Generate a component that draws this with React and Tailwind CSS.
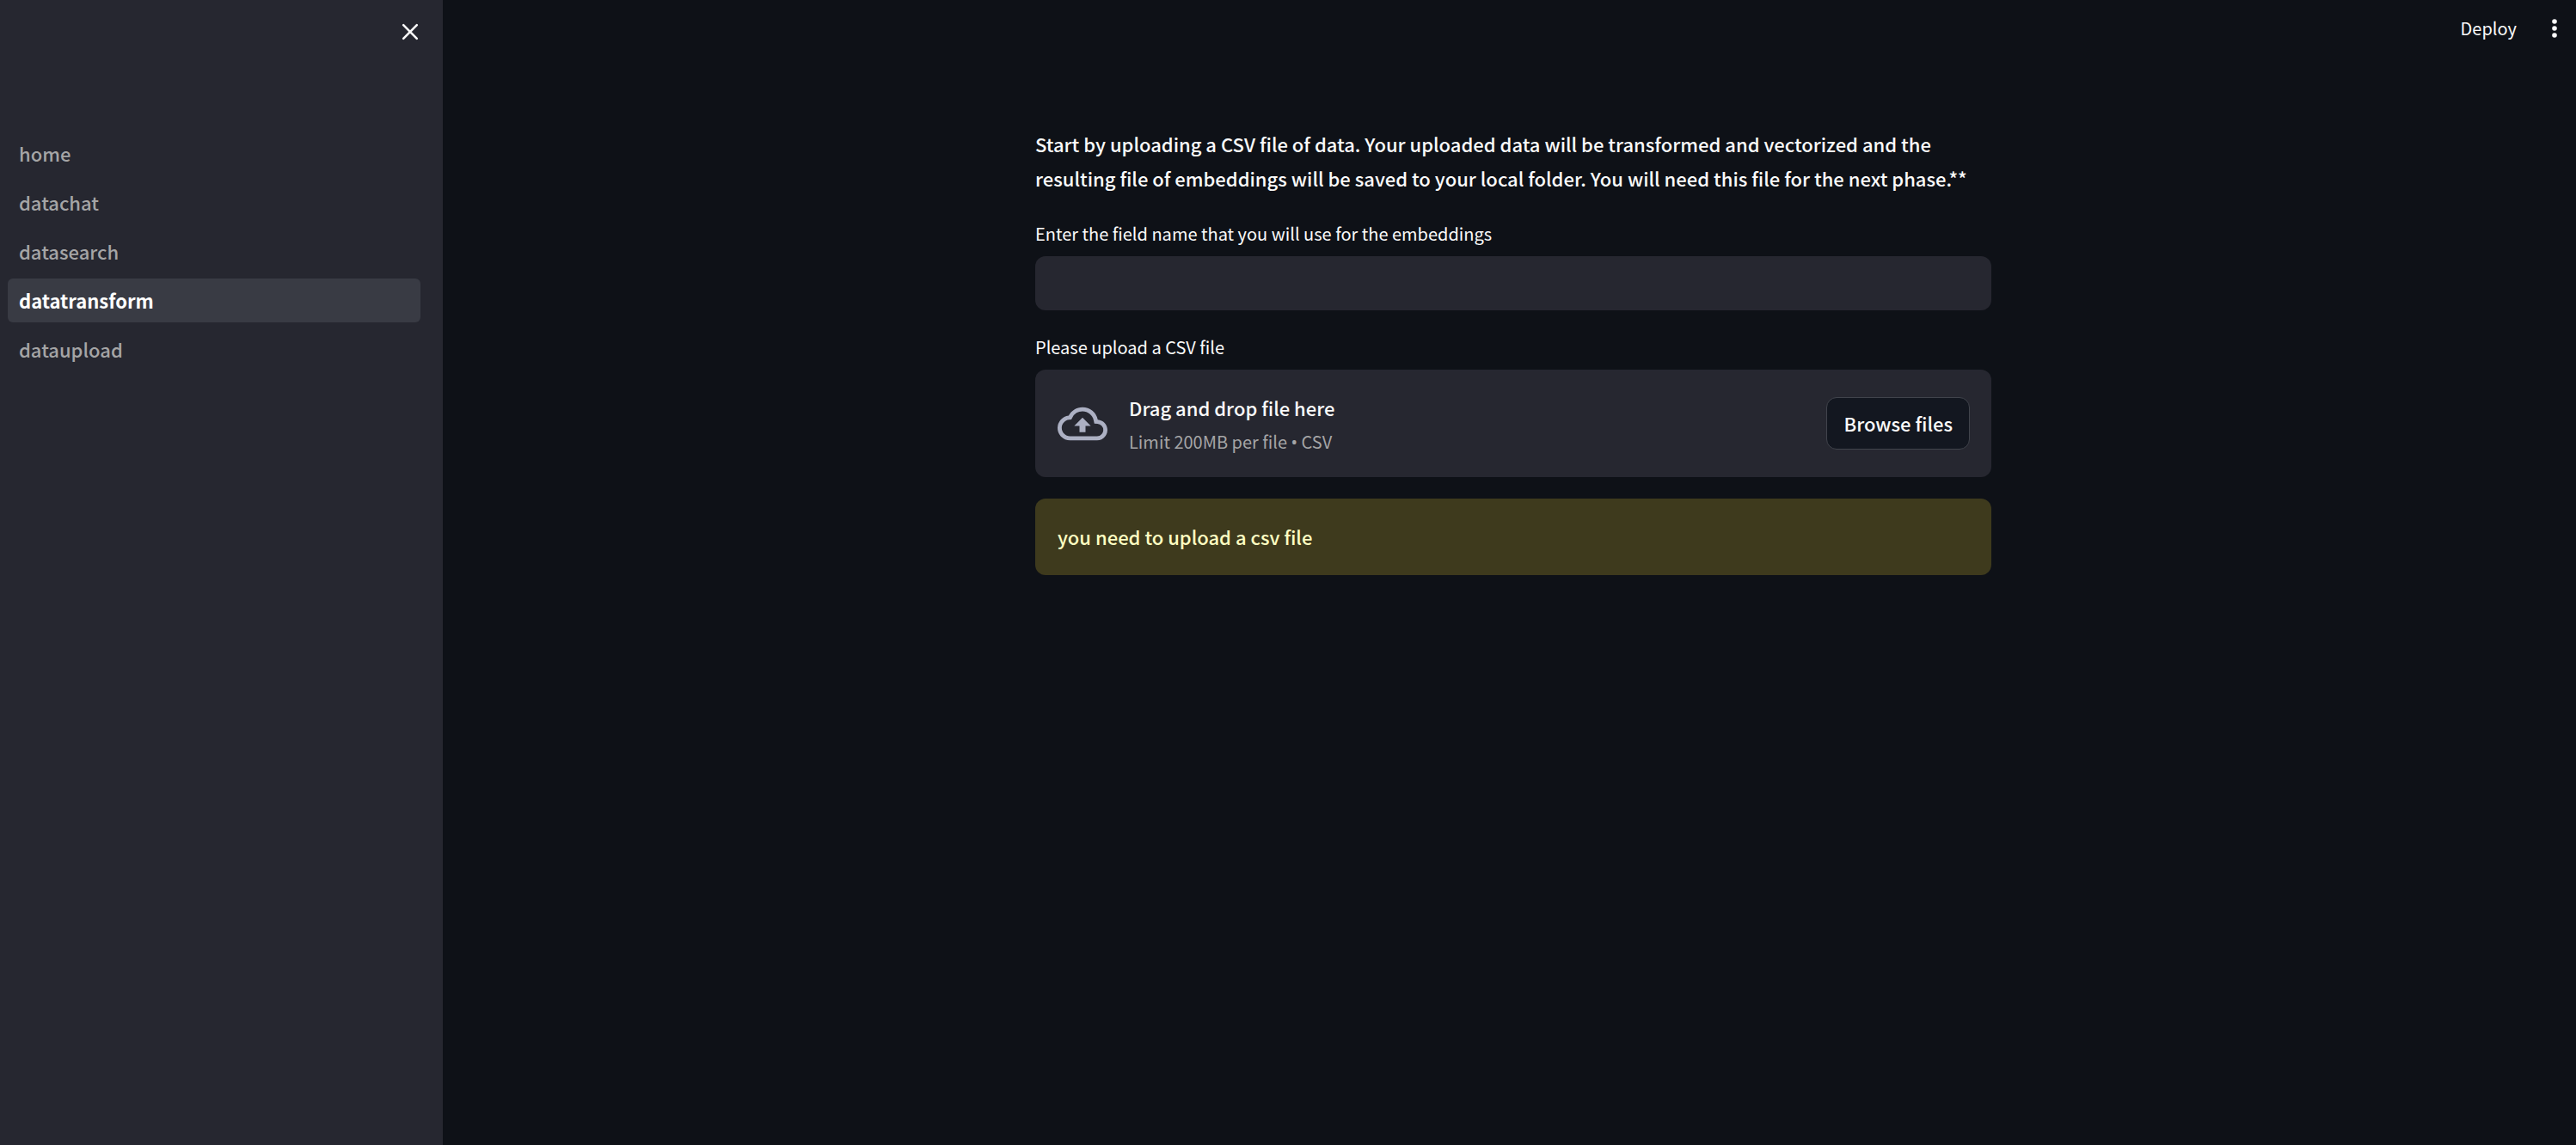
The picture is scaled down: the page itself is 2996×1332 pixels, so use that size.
const pages = ["home", "datachat", "datasearch", "datatransform", "dataupload"];
const currentPage = "datatransform";

function CloudUploadIcon() {
  return (
    <svg viewBox="0 0 24 24" fill="currentColor" className="size-[58px] shrink-0 text-[#acb0c3]" aria-hidden="true">
      <path d="M19.35 10.04A7.49 7.49 0 0012 4C9.11 4 6.6 5.64 5.35 8.04A5.994 5.994 0 000 14c0 3.31 2.69 6 6 6h13c2.76 0 5-2.24 5-5 0-2.64-2.05-4.78-4.65-4.96zM19 18H6c-2.21 0-4-1.79-4-4 0-2.05 1.53-3.76 3.56-3.97l1.07-.11.5-.95A5.469 5.469 0 0112 6c2.62 0 4.88 1.86 5.39 4.43l.3 1.5 1.53.11A2.98 2.98 0 0122 15c0 1.65-1.35 3-3 3zM8 13h2.55v3h2.9v-3H16l-4-4z" />
    </svg>
  );
}

function Sidebar() {
  return (
    <aside className="flex w-[515px] shrink-0 flex-col bg-[#262730]">
      <div className="flex h-[153px] items-start justify-end px-[22px] pt-[21px]">
        <button type="button" aria-label="Close sidebar" className="flex size-8 items-center justify-center">
          <svg viewBox="0 0 20 20" fill="none" stroke="currentColor" strokeWidth="2.6" strokeLinecap="round" className="size-5" aria-hidden="true">
            <path d="M2.2 2.2L17.8 17.8M17.8 2.2L2.2 17.8" />
          </svg>
        </button>
      </div>
      <nav className="mr-[26px] ml-[9px] flex flex-col gap-[6px]">
        {pages.map((page) => (
          <a
            key={page}
            href={`#${page}`}
            aria-current={page === currentPage ? "page" : undefined}
            className={
              page === currentPage
                ? "rounded-md bg-[#393b44] px-[13px] text-[22px] leading-[51px] font-bold text-white"
                : "rounded-md px-[13px] text-[22px] leading-[51px] font-medium text-[#a5a5a6]"
            }
          >
            {page}
          </a>
        ))}
      </nav>
    </aside>
  );
}

function Header() {
  return (
    <header className="flex h-[66px] items-center justify-end gap-8 pr-[13px]">
      <button type="button" className="text-[20px] leading-8">Deploy</button>
      <button type="button" aria-label="Main menu" className="flex h-8 w-6 items-center justify-center">
        <svg viewBox="0 0 8 24" fill="currentColor" className="h-6 w-2" aria-hidden="true">
          <circle cx="4" cy="4" r="2.8" />
          <circle cx="4" cy="12" r="2.8" />
          <circle cx="4" cy="20" r="2.8" />
        </svg>
      </button>
    </header>
  );
}

export default function App() {
  return (
    <div className="flex min-h-screen bg-[#0e1117] font-['Noto_Sans_CJK_SC',sans-serif] text-[#fafafa]">
      <Sidebar />
      <div className="flex min-w-0 flex-1 flex-col">
        <Header />
        <main className="flex justify-center pt-[81px] pl-[9px]">
          <div className="flex w-full max-w-[1112px] flex-col gap-[25px]">
            <p className="pb-0.5 text-[22px] leading-10 font-medium">
              Start by uploading a CSV file of data. Your uploaded data will be transformed and vectorized and the
              resulting file of embeddings will be saved to your local folder. You will need this file for the next
              phase.**
            </p>
            <div className="flex flex-col gap-[9px]">
              <label htmlFor="field-name" className="text-[20px] leading-[35px]">
                Enter the field name that you will use for the embeddings
              </label>
              <input id="field-name" type="text" className="h-[63px] rounded-xl bg-[#262730] px-[26px] text-[22px] outline-none" />
            </div>
            <div className="flex flex-col gap-[9px]">
              <label htmlFor="browse" className="text-[20px] leading-[35px]">
                Please upload a CSV file
              </label>
              <section className="flex h-[125px] items-center gap-[25px] rounded-xl bg-[#262730] pr-[25px] pl-[26px]">
                <CloudUploadIcon />
                <div className="flex flex-1 flex-col pt-1">
                  <span className="text-[22px] leading-10 font-medium">Drag and drop file here</span>
                  <span className="text-[20px] leading-10 text-[#a5a5a6]">
                    Limit 200MB per file <span className="font-['Noto_Sans',sans-serif]">•</span> CSV
                  </span>
                </div>
                <button
                  id="browse"
                  type="button"
                  className="h-[61px] rounded-xl border border-[#41444c] bg-[#131720] px-[19px] pb-0.5 text-[22px] leading-10 font-medium"
                >
                  Browse files
                </button>
              </section>
            </div>
            <div role="alert" className="rounded-xl bg-[#3e3a1d] px-[26px] py-6 text-[22px] leading-[41px] font-medium text-[#ffffc2]">
              you need to upload a csv file
            </div>
          </div>
        </main>
      </div>
    </div>
  );
}
